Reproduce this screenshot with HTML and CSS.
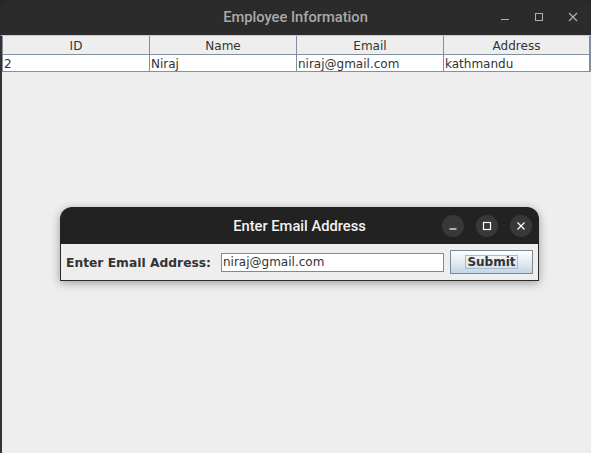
FILE: index.html
```html
<!DOCTYPE html>
<html>
<head>
<meta charset="utf-8">
<link rel="stylesheet" href="styles.css">
</head>
<body>
<div class="desktop">
  <div class="window">
    <div class="titlebar">
      <div class="title">Employee Information</div>
      <div class="controls">
        <span class="ctl">
          <svg width="12" height="12" viewBox="0 0 12 12"><line x1="2" y1="8.5" x2="10" y2="8.5" stroke="#b0b0b0" stroke-width="1"/></svg>
        </span>
        <span class="ctl">
          <svg width="12" height="12" viewBox="0 0 12 12"><rect x="2.5" y="2.5" width="7" height="7" fill="none" stroke="#b0b0b0" stroke-width="1"/></svg>
        </span>
        <span class="ctl">
          <svg width="12" height="12" viewBox="0 0 12 12"><path d="M2 2 L10 10 M10 2 L2 10" stroke="#b0b0b0" stroke-width="1.2"/></svg>
        </span>
      </div>
    </div>
    <div class="content">
      <div class="table">
        <div class="th">ID</div>
        <div class="th">Name</div>
        <div class="th">Email</div>
        <div class="th last">Address</div>
        <div class="td">2</div>
        <div class="td">Niraj</div>
        <div class="td">niraj@gmail.com</div>
        <div class="td last">kathmandu</div>
      </div>
    </div>
  </div>

  <div class="dialog">
    <div class="dlg-titlebar">
      <div class="dlg-title">Enter Email Address</div>
      <div class="dlg-controls">
        <span class="round">
          <svg width="10" height="10" viewBox="0 0 10 10"><line x1="1.5" y1="8" x2="8.5" y2="8" stroke="#ffffff" stroke-width="1.2"/></svg>
        </span>
        <span class="round">
          <svg width="10" height="10" viewBox="0 0 10 10"><rect x="1.5" y="1.5" width="7" height="7" fill="none" stroke="#ffffff" stroke-width="1.2"/></svg>
        </span>
        <span class="round">
          <svg width="10" height="10" viewBox="0 0 10 10"><path d="M1.5 1.5 L8.5 8.5 M8.5 1.5 L1.5 8.5" stroke="#ffffff" stroke-width="1.2"/></svg>
        </span>
      </div>
    </div>
    <div class="dlg-body">
      <span class="label">Enter Email Address:</span>
      <div class="field">niraj@gmail.com</div>
      <div class="button"><span class="focus">Submit</span></div>
    </div>
  </div>
</div>
</body>
</html>
```
FILE: styles.css
```css
html, body {
  margin: 0;
  padding: 0;
}
body {
  width: 591px;
  height: 453px;
  overflow: hidden;
  background: #262626;
}
.desktop {
  position: relative;
  width: 591px;
  height: 453px;
}
.window {
  display: flex;
  flex-direction: column;
  width: 591px;
  height: 453px;
}
.titlebar {
  height: 35px;
  background: #2b2b2b;
  border-radius: 9px 9px 0 0;
  position: relative;
  display: flex;
  align-items: center;
  justify-content: center;
}
.title {
  font-family: Roboto, "Noto Sans", sans-serif;
  font-weight: 500;
  font-size: 14.7px;
  color: #a9a9a9;
  padding-bottom: 1px;
}
.controls {
  position: absolute;
  right: 12px;
  top: 11px;
  display: flex;
  gap: 22px;
}
.ctl {
  width: 12px;
  height: 12px;
  display: block;
}
.ctl svg { display: block; }
.content {
  flex: 1;
  background: #eeeeee;
  border-left: 2px solid #333;
  border-top: 1px solid #c8ccd0;
}
.table {
  display: grid;
  grid-template-columns: 147px 147px 147px 147px;
  font-family: "DejaVu Sans", sans-serif;
  font-size: 12px;
  color: #333333;
  border-left: 1px solid #8090a0;
  border-bottom: 1px solid #8090a0;
  width: 588px;
}
.th {
  height: 18px;
  line-height: 20px;
  text-align: center;
  background: #eeeeee;
  border-right: 1px solid #8090a0;
  border-bottom: 1px solid #8090a0;
}
.td {
  height: 16px;
  line-height: 18px;
  background: #ffffff;
  padding-left: 1px;
  border-right: 1px solid #8090a0;
  white-space: nowrap;
}
.th.last, .td.last { border-right: 2px solid #8090a0; }

.dialog {
  position: absolute;
  left: 60px;
  top: 207px;
  width: 479px;
  display: flex;
  flex-direction: column;
  border-radius: 12px 12px 0 0;
  box-shadow: 0 2px 10px rgba(0,0,0,0.35);
}
.dlg-titlebar {
  height: 37px;
  background: #222222;
  border-radius: 12px 12px 0 0;
  position: relative;
  display: flex;
  align-items: center;
  justify-content: center;
}
.dlg-title {
  font-family: Roboto, "Noto Sans", sans-serif;
  font-weight: 500;
  font-size: 14.7px;
  color: #f2f2f2;
  padding-left: 0;
}
.dlg-controls {
  position: absolute;
  right: 7px;
  top: 8px;
  display: flex;
  gap: 12px;
}
.round {
  width: 22px;
  height: 22px;
  border-radius: 50%;
  background: #383838;
  display: flex;
  align-items: center;
  justify-content: center;
}
.round svg { display: block; }
.dlg-body {
  background: #eeeeee;
  border: 1px solid #2a2a2a;
  border-top: none;
  height: 36px;
  display: flex;
  align-items: center;
  padding-left: 5px;
}
.label {
  font-family: "DejaVu Sans", sans-serif;
  font-weight: bold;
  font-size: 12.3px;
  color: #333333;
  width: 155px;
  padding-top: 1px;
}
.field {
  width: 220px;
  height: 17px;
  line-height: 17px;
  border: 1px solid #7a8a99;
  background: #ffffff;
  font-family: "DejaVu Sans", sans-serif;
  font-size: 12px;
  color: #333333;
  padding-left: 1px;
}
.button {
  margin-left: 6px;
  width: 83px;
  height: 24px;
  border: 1px solid #7a8a99;
  background: linear-gradient(#ffffff, #e1e9f1 55%, #c5d5e5);
  display: flex;
  align-items: center;
  justify-content: center;
  box-sizing: border-box;
}
.focus {
  font-family: "DejaVu Sans", sans-serif;
  font-weight: bold;
  font-size: 12px;
  color: #333333;
  border: 1px solid #a8bccf;
  padding: 0 1px;
  line-height: 12px;
}
```
